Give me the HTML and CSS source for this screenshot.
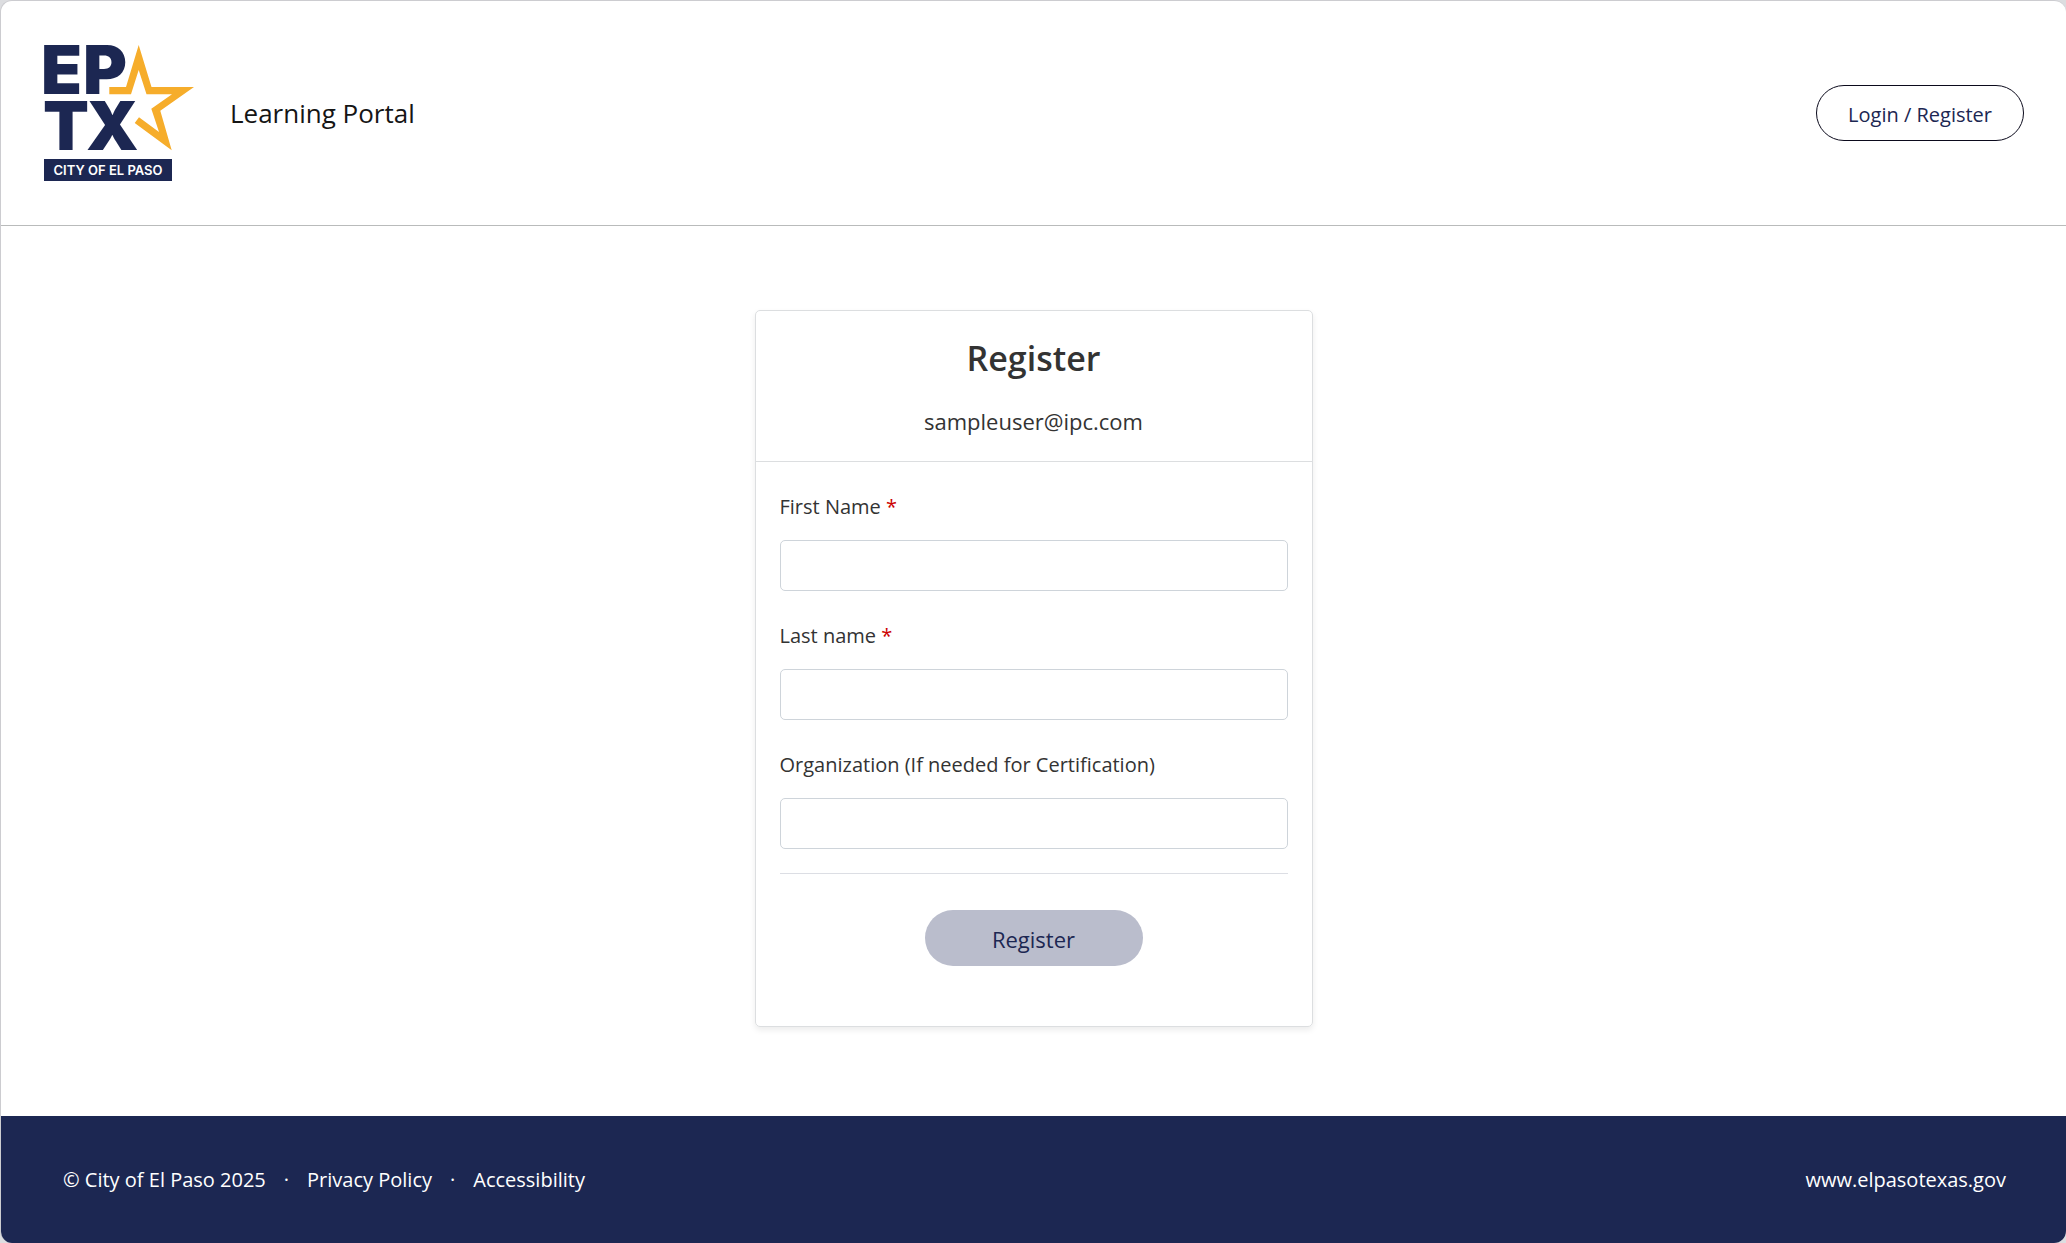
FILE: index.html
```html
<!DOCTYPE html>
<html lang="en">
<head>
    <meta charset="UTF-8">
    <meta name="viewport" content="width=device-width, initial-scale=1.0">
    <title>Register | Learning Portal</title>
    <link rel="stylesheet" href="styles.css">
</head>
<body>
    <div class="page">
        <header class="site-header">
            <a class="brand" href="#">
                <svg class="logo" viewBox="0 0 150 136" role="img" aria-label="City of El Paso">
                    <g class="logo-letters">
                        <text x="-3" y="49">E</text>
                        <text x="39" y="49">P</text>
                        <text x="-1" y="105">T</text>
                        <text x="42" y="105">X</text>
                    </g>
                    <path class="logo-star" d="M65.3 42H82L94.7 0L107.5 42H150L116.3 65.7L127.7 105.3L90.7 78L95 72.3L115 87L107.3 63.7L128 49.3H102.5L94.7 25L87 49.3H65.3Z"/>
                    <rect class="logo-bar" y="114" width="128" height="22"/>
                    <text class="logo-name" x="64" y="130">CITY OF EL PASO</text>
                </svg>
                <span class="portal-name">Learning Portal</span>
            </a>
            <button class="btn btn-login" type="button">Login / Register</button>
        </header>

        <main class="content">
            <form class="card">
                <div class="card-header">
                    <h1>Register</h1>
                    <p class="email">sampleuser@ipc.com</p>
                </div>
                <div class="card-body">
                    <div class="field">
                        <label for="firstName">First Name <span class="required">*</span></label>
                        <input type="text" id="firstName" required>
                    </div>
                    <div class="field">
                        <label for="lastName">Last name <span class="required">*</span></label>
                        <input type="text" id="lastName" required>
                    </div>
                    <div class="field">
                        <label for="organization">Organization (If needed for Certification)</label>
                        <input type="text" id="organization">
                    </div>
                    <div class="actions">
                        <button class="btn btn-register" type="submit" disabled>Register</button>
                    </div>
                </div>
            </form>
        </main>

        <footer class="site-footer">
            <div class="footer-links">
                <span>© City of El Paso 2025</span>
                <span>·</span>
                <a href="#">Privacy Policy</a>
                <span>·</span>
                <a href="#">Accessibility</a>
            </div>
            <a href="#">www.elpasotexas.gov</a>
        </footer>
    </div>
</body>
</html>
```
FILE: styles.css
```css
* {
    box-sizing: border-box;
}
body {
    margin: 0;
    background-color: #dcdde0;
    font-family: 'Segoe UI', 'Open Sans', sans-serif;
    font-size: 20px;
    line-height: 28px;
    color: #333;
}
.page {
    display: flex;
    flex-direction: column;
    min-height: 100vh;
    background-color: #fff;
    border: 1px solid #ccccd0;
    border-right: 0;
    border-bottom: 0;
    border-radius: 12px;
    overflow: hidden;
}
.site-header {
    display: flex;
    align-items: center;
    justify-content: space-between;
    padding: 44px 42px 44px 43px;
    border-bottom: 1px solid #b9bbbb;
}
.brand {
    display: flex;
    align-items: center;
    gap: 36px;
    color: #151515;
    text-decoration: none;
}
.logo {
    width: 150px;
    height: 136px;
    overflow: visible;
}
.logo-letters {
    font-family: Inter, sans-serif;
    font-size: 67px;
    font-weight: 900;
    fill: #1c2752;
}
.logo-star {
    fill: #f6ad2b;
}
.logo-bar {
    fill: #1c2752;
}
.logo-name {
    font-family: Inter, sans-serif;
    font-size: 13px;
    font-weight: 600;
    text-anchor: middle;
    fill: #fff;
}
.portal-name {
    font-size: 26px;
}
.btn {
    height: 56px;
    border-radius: 28px;
    font-family: inherit;
    color: #1c2752;
    cursor: pointer;
}
.btn-login {
    padding: 2px 31px 0;
    background-color: #fff;
    border: 1px solid #0b0a1c;
    font-size: 20px;
}
.content {
    flex: 1;
    padding: 84px 20px 80px;
}
.card {
    max-width: 558px;
    margin: 0 auto;
    border: 1px solid #dcdee0;
    border-radius: 5px;
    box-shadow: 0 3px 6px rgba(0, 0, 0, 0.08);
}
.card-header {
    padding: 23px 24px 25px;
    text-align: center;
    border-bottom: 1px solid #dcdee0;
}
h1 {
    margin: 0 0 24px;
    font-size: 34px;
    line-height: 48px;
    font-weight: 600;
}
.email {
    margin: 0;
    font-size: 22px;
    line-height: 30px;
}
.card-body {
    padding: 31px 24px 60px;
}
.field {
    display: flex;
    flex-direction: column;
    gap: 19px;
    margin-bottom: 31px;
}
.required {
    color: #c00;
}
input[type="text"] {
    width: 100%;
    height: 51px;
    padding: 8px 16px;
    border: 1px solid #ced4da;
    border-radius: 5px;
    background-color: #fff;
    font: inherit;
}
.actions {
    margin-top: -7px;
    padding-top: 36px;
    border-top: 1px solid #dcdee4;
}
.btn-register {
    display: block;
    width: 218px;
    margin: 0 auto;
    padding: 2px 0 0;
    background-color: #babdcc;
    border: 0;
    font-size: 22px;
    cursor: default;
}
.site-footer {
    display: flex;
    align-items: center;
    justify-content: space-between;
    padding: 50px 60px 49px 62px;
    background-color: #1c2752;
    color: #fff;
}
.site-footer a {
    color: #fff;
    text-decoration: none;
}
.footer-links {
    display: flex;
    gap: 18px;
}
@media (max-width: 700px) {
    .site-header, .site-footer {
        flex-direction: column;
        gap: 20px;
    }
    .footer-links {
        flex-wrap: wrap;
    }
}
```
